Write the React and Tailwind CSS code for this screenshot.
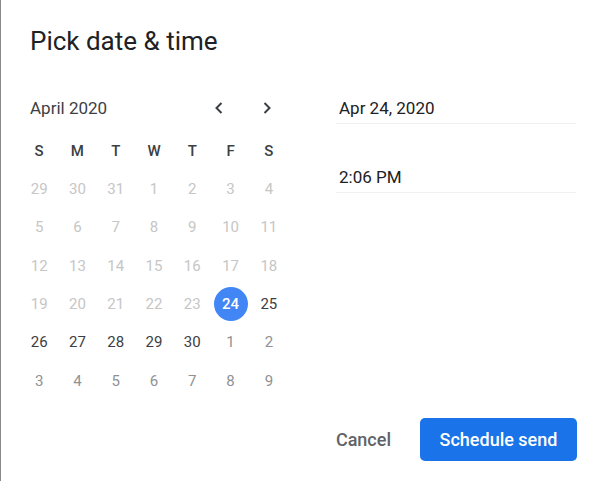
import React from "react";

const font = { fontFamily: "Roboto, 'Liberation Sans', sans-serif" };

function Chevron({ dir }) {
  return (
    <svg width="10" height="12" viewBox="0 0 10 12" className="block">
      {dir === "left" ? (
        <path d="M7.5 1 L2.5 6 L7.5 11" fill="none" stroke="#3c4043" strokeWidth="2" />
      ) : (
        <path d="M2.5 1 L7.5 6 L2.5 11" fill="none" stroke="#3c4043" strokeWidth="2" />
      )}
    </svg>
  );
}

const headers = ["S", "M", "T", "W", "T", "F", "S"];
// type: d = disabled past, a = active, s = selected, n = next month
const days = [
  ["29", "d"], ["30", "d"], ["31", "d"], ["1", "d"], ["2", "d"], ["3", "d"], ["4", "d"],
  ["5", "d"], ["6", "d"], ["7", "d"], ["8", "d"], ["9", "d"], ["10", "d"], ["11", "d"],
  ["12", "d"], ["13", "d"], ["14", "d"], ["15", "d"], ["16", "d"], ["17", "d"], ["18", "d"],
  ["19", "d"], ["20", "d"], ["21", "d"], ["22", "d"], ["23", "d"], ["24", "s"], ["25", "a"],
  ["26", "a"], ["27", "a"], ["28", "a"], ["29", "a"], ["30", "a"], ["1", "n"], ["2", "n"],
  ["3", "n"], ["4", "n"], ["5", "n"], ["6", "n"], ["7", "n"], ["8", "n"], ["9", "n"],
];

export default function App() {
  return (
    <div
      className="w-[605px] h-[481px] bg-white border-l border-[#8a8a8a] flex flex-col overflow-hidden"
      style={font}
    >
      <div className="pl-[29px] pt-[25px] text-[26px] leading-[32px] text-[#202124] h-[57px]">
        Pick date &amp; time
      </div>
      <div className="flex mt-[39px]">
        {/* calendar */}
        <div className="w-[315px] flex flex-col">
          <div className="flex items-center h-[24px]">
            <div className="pl-[29px] text-[17px] leading-[24px] text-[#3c4043] w-[208px]">
              April 2020
            </div>
            <div className="w-[20px] flex justify-center">
              <Chevron dir="left" />
            </div>
            <div className="w-[28px]" />
            <div className="w-[20px] flex justify-center">
              <Chevron dir="right" />
            </div>
          </div>
          <div className="ml-[19px] mt-[12px] w-[268px] grid grid-cols-7">
            {headers.map((h, i) => (
              <div
                key={i}
                className="h-[38.3px] flex items-center justify-center text-[15px] font-medium text-[#3c4043]"
              >
                {h}
              </div>
            ))}
            {days.map(([d, t], i) => (
              <div key={i} className="h-[38.3px] flex items-center justify-center">
                {t === "s" ? (
                  <div className="w-[34px] h-[34px] rounded-full bg-[#4285f4] text-white text-[15px] font-medium flex items-center justify-center">
                    {d}
                  </div>
                ) : (
                  <span
                    className={
                      "text-[15px] " +
                      (t === "d"
                        ? "text-[#c6c6c6]"
                        : t === "a"
                        ? "text-[#3c4043]"
                        : "text-[#8e9296]")
                    }
                  >
                    {d}
                  </span>
                )}
              </div>
            ))}
          </div>
        </div>
        {/* right fields */}
        <div className="ml-[20px] w-[240px] flex flex-col">
          <div className="pl-[3px] text-[17px] leading-[24px] text-[#202124] pb-[3px] border-b border-[#eef0f1]">
            Apr 24, 2020
          </div>
          <div className="mt-[41px] pl-[3px] text-[17px] leading-[24px] text-[#202124] pb-[3px] border-b border-[#eef0f1]">
            2:06 PM
          </div>
        </div>
      </div>
      <div className="flex-1" />
      <div className="flex items-center justify-end pr-[28px] pb-[20px]">
        <div className="text-[18px] font-medium text-[#5f6368] mr-[29px]">Cancel</div>
        <div className="w-[157px] h-[43px] rounded-[5px] bg-[#1a73e8] text-white text-[18px] font-medium flex items-center justify-center">
          Schedule send
        </div>
      </div>
    </div>
  );
}
